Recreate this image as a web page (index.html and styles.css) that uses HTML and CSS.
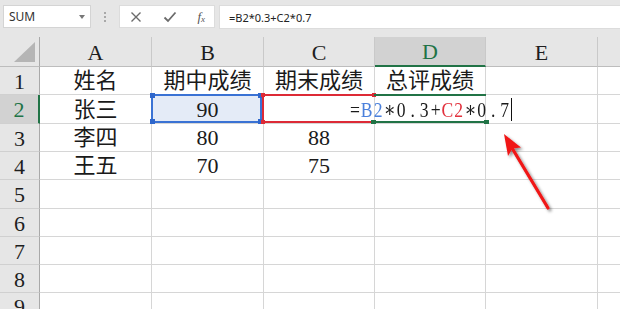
FILE: index.html
```html
<!DOCTYPE html>
<html>
<head>
<meta charset="utf-8">
<link rel="stylesheet" href="styles.css">
</head>
<body>
<div class="app">
  <div class="toolbar">
    <div class="namebox"><span class="nb-text">SUM</span><span class="nb-arrow"></span></div>
    <div class="dots"><i></i><i></i><i></i></div>
    <div class="fbtns">
      <svg class="ico" width="12" height="12" viewBox="0 0 12 12"><path d="M1.5 1.5 L10.5 10.5 M10.5 1.5 L1.5 10.5" stroke="#6b6b6b" stroke-width="1.4" fill="none"/></svg>
      <svg class="ico" width="14" height="12" viewBox="0 0 14 12"><path d="M1.5 6.5 L5 10 L12.5 1.5" stroke="#6b6b6b" stroke-width="1.8" fill="none"/></svg>
      <span class="fx">f<sub>x</sub></span>
    </div>
    <div class="finput">=B2*0.3+C2*0.7</div>
  </div>
  <div class="sheet">
    <div class="ch corner"><svg width="22" height="21" viewBox="0 0 22 21"><polygon points="21,0 21,20 0,20" fill="#b5b5b5"/></svg></div>
    <div class="ch">A</div>
    <div class="ch">B</div>
    <div class="ch">C</div>
    <div class="ch sel">D</div>
    <div class="ch">E</div>
    <div class="ch last"></div>

    <div class="rh">1</div>
    <div class="c">姓名</div>
    <div class="c">期中成绩</div>
    <div class="c">期末成绩</div>
    <div class="c">总评成绩</div>
    <div class="c"></div>
    <div class="c last"></div>

    <div class="rh sel">2</div>
    <div class="c">张三</div>
    <div class="c ref"><span class="hl hl-b"><i class="h tl"></i><i class="h tr"></i><i class="h bl"></i><i class="h br"></i></span><span class="val">90</span></div>
    <div class="c ref"><span class="hl hl-c"><i class="h tl"></i><i class="h tr"></i><i class="h bl"></i><i class="h br"></i></span></div>
    <div class="c ref"><span class="hl hl-d"><i class="h tl"></i><i class="h tr"></i><i class="h bl"></i><i class="h br"></i></span><span class="edit"><span class="glyphs"><b>=</b><b class="rb">B</b><b class="rb">2</b><b class="ast">∗</b><b>0</b><b>.</b><b>3</b><b>+</b><b class="rc">C</b><b class="rc">2</b><b class="ast">∗</b><b>0</b><b>.</b><b>7</b></span></span></div>
    <div class="c"></div>
    <div class="c last"></div>

    <div class="rh">3</div>
    <div class="c">李四</div>
    <div class="c">80</div>
    <div class="c">88</div>
    <div class="c"></div>
    <div class="c"></div>
    <div class="c last"></div>

    <div class="rh">4</div>
    <div class="c">王五</div>
    <div class="c">70</div>
    <div class="c">75</div>
    <div class="c"></div>
    <div class="c"></div>
    <div class="c last"></div>

    <div class="rh">5</div>
    <div class="c"></div><div class="c"></div><div class="c"></div><div class="c"></div><div class="c"></div><div class="c last"></div>
    <div class="rh">6</div>
    <div class="c"></div><div class="c"></div><div class="c"></div><div class="c"></div><div class="c"></div><div class="c last"></div>
    <div class="rh">7</div>
    <div class="c"></div><div class="c"></div><div class="c"></div><div class="c"></div><div class="c"></div><div class="c last"></div>
    <div class="rh">8</div>
    <div class="c"></div><div class="c"></div><div class="c"></div><div class="c"></div><div class="c"></div><div class="c last"></div>
    <div class="rh rh-cut">9</div>
    <div class="c"></div><div class="c"></div><div class="c"></div><div class="c"></div><div class="c"></div><div class="c last"></div>
  </div>
  <svg class="arrow" width="620" height="309" viewBox="0 0 620 309">
    <defs>
      <filter id="sh" x="-20%" y="-20%" width="140%" height="140%">
        <feDropShadow dx="2" dy="2" stdDeviation="1.6" flood-color="#000" flood-opacity="0.45"/>
      </filter>
    </defs>
    <g filter="url(#sh)">
      <line x1="548" y1="208" x2="512" y2="148" stroke="#f01616" stroke-width="3.2" stroke-linecap="round"/>
      <polygon points="504,134 521,147.5 512.5,148.5 508,156" fill="#f01616"/>
    </g>
  </svg>
</div>
</body>
</html>
```

FILE: styles.css
```css
* { box-sizing: border-box; }
html, body { margin: 0; padding: 0; }
body {
  width: 620px;
  height: 309px;
  overflow: hidden;
  background: #e6e6e6;
  font-family: "Liberation Serif", "Noto Sans CJK SC", serif;
}
.app { position: relative; width: 620px; height: 309px; overflow: hidden; }

.toolbar {
  display: flex;
  align-items: flex-start;
  height: 37px;
  padding-top: 5px;
  background: #e6e6e6;
}
.namebox {
  margin-left: 3px;
  width: 88px;
  height: 23px;
  background: #fff;
  border: 1px solid #d4d4d4;
  display: flex;
  align-items: center;
  justify-content: space-between;
  padding: 0 5px 0 5px;
  font-family: "Noto Sans", sans-serif;
  font-size: 12px;
  color: #333;
}
.nb-arrow {
  width: 0; height: 0;
  border-left: 3.5px solid transparent;
  border-right: 3.5px solid transparent;
  border-top: 4px solid #777;
}
.dots {
  width: 28px;
  height: 23px;
  display: flex;
  flex-direction: column;
  align-items: center;
  justify-content: center;
  gap: 2px;
}
.dots i { display: block; width: 2px; height: 2px; background: #a8a8a8; }
.fbtns {
  width: 96px;
  height: 23px;
  background: #fff;
  border: 1px solid #dcdcdc;
  display: flex;
  align-items: center;
  justify-content: space-between;
  padding: 0 9px 0 10px;
}
.fx {
  font-family: "Liberation Serif", serif;
  font-style: italic;
  font-size: 13px;
  color: #555;
  line-height: 1;
}
.fx sub { font-size: 9px; vertical-align: -1px; }
.finput {
  margin-left: 4px;
  flex: 1;
  height: 24px;
  background: #fff;
  border: 1px solid #dcdcdc;
  border-right: none;
  font-family: "Noto Sans", sans-serif;
  font-size: 11px;
  color: #222;
  display: flex;
  align-items: center;
  padding-left: 9px;
}

.sheet {
  display: grid;
  grid-template-columns: 40px 112px 112px 111px 111px 112px 22px;
  grid-template-rows: 30px 28px 29px 28px 28px 29px 28px 28px 28px 17px;
  background: #fff;
}
.ch {
  background: #e6e6e6;
  border-right: 1px solid #c9c9c9;
  border-bottom: 1px solid #bdbdbd;
  display: flex;
  align-items: center;
  justify-content: center;
  font-size: 22px;
  line-height: 1;
  color: #1e1e1e;
  padding-top: 2px;
}
.ch.corner { border-right: 1px solid #a9a9a9; align-items: flex-end; justify-content: flex-end; padding: 0 3px 3px 0; }
.ch.sel {
  background: #d2d2d2;
  color: #217346;
  border-bottom: 2px solid #217346;
}
.ch.last { border-right: none; }
.rh {
  background: #e6e6e6;
  border-right: 1px solid #a9a9a9;
  border-bottom: 1px solid #d0d0d0;
  display: flex;
  align-items: center;
  justify-content: center;
  font-size: 22px;
  line-height: 1;
  color: #1e1e1e;
  padding-top: 2px;
}
.rh-cut { align-items: flex-start; padding-top: 4px; overflow: hidden; line-height: 20px; }
.rh.sel {
  background: #d2d2d2;
  color: #217346;
  border-right: 2px solid #217346;
}
.c {
  border-right: 1px solid #d6d6d6;
  border-bottom: 1px solid #d6d6d6;
  display: flex;
  align-items: center;
  justify-content: center;
  font-size: 22px;
  line-height: 1;
  color: #1a1a1a;
  white-space: nowrap;
  padding-top: 1px;
}
.c.last { border-right: none; }
.ref { position: relative; z-index: 1; }
.hl {
  position: absolute;
  top: -1px;
  bottom: 0;
  left: -1px;
  right: 1px;
  pointer-events: none;
}
.hl-b { border: 2px solid #3a72d4; background: #e4ebf7; }
.hl-c { border: 2px solid #dd2a36; border-right: none; left: -2px; right: 0; z-index: 2; }
.hl-d { border-top: 2px solid #217346; border-bottom: 2px solid #217346; left: -1px; right: -1px; z-index: 2; }
.val { position: relative; }
.h { position: absolute; width: 5px; height: 5px; display: block; }
.hl-b .h { background: #2f67cc; }
.hl-c .h { background: #dd2a36; width: 4px; height: 4px; }
.hl-d .h { background: #217346; width: 5px; height: 4px; }
.h.tl { top: -3px; left: -3px; }
.h.tr { top: -3px; right: -3px; }
.h.bl { bottom: -3px; left: -3px; }
.h.br { bottom: -3px; right: -3px; }
.hl-d .h.tl, .hl-d .h.tr { display: none; }
.hl-c .h.tr, .hl-c .h.br { right: -2px; }

.edit {
  position: absolute;
  right: -27px;
  top: 3px;
  height: 23px;
  width: 162px;
  display: flex;
  align-items: center;
  justify-content: flex-end;
  font-family: "Liberation Serif", serif;
  font-size: 22px;
  color: #1a1a1a;
  border-right: 1px solid #111;
  padding-right: 1px;
  z-index: 3;
}
.glyphs {
  display: flex;
  transform: scaleX(0.8);
  transform-origin: right center;
}
.glyphs b {
  font-weight: normal;
  display: block;
  width: 14.4px;
  text-align: center;
}
.glyphs b.ast { font-family: "DejaVu Serif", "DejaVu Sans", serif; font-size: 22px; }
.rb { color: #4a80dc; }
.rc { color: #e2313d; }

.arrow { position: absolute; left: 0; top: 0; pointer-events: none; }
```
